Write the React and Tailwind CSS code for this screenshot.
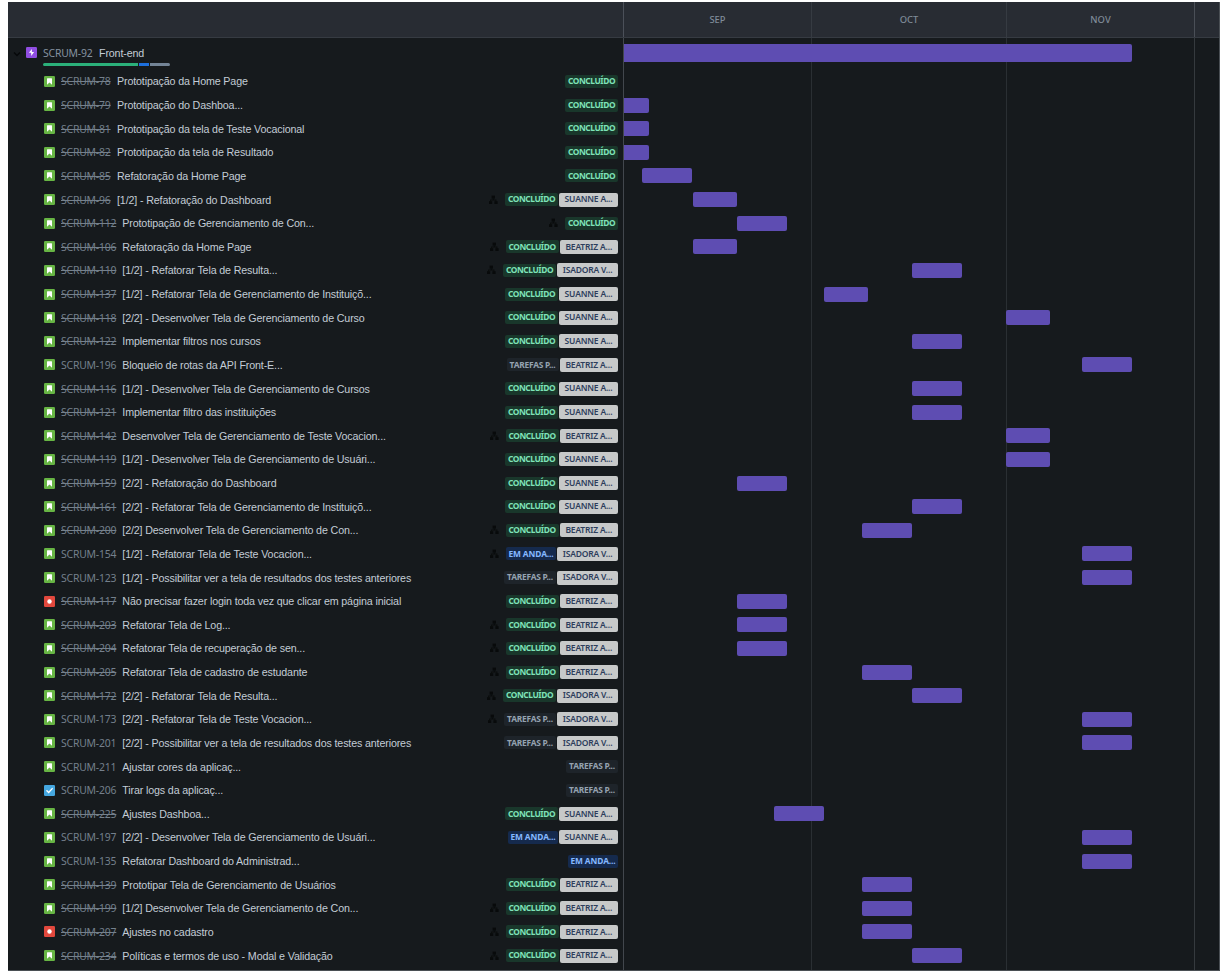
import React from "react";

const ORIGIN = 624;

const STATUS = {
  done: { label: "CONCLUÍDO", cls: "bg-[#19372b] text-[#7ee2b8] w-[53px] tracking-[-0.42px]" },
  todo: { label: "TAREFAS P...", cls: "bg-[#1e242a] text-[#95a2b0] w-[52px] tracking-[-0.22px]" },
  doing: { label: "EM ANDA...", cls: "bg-[#152a4d] text-[#85b8ff] w-[50px] tracking-[-0.1px]" },
};

const PEOPLE = {
  S: { label: "SUANNE A...", cls: "w-[59px]" },
  B: { label: "BEATRIZ A...", cls: "w-[58.5px]" },
  I: { label: "ISADORA V...", cls: "w-[61px]" },
};

// key, title, status, assignee, has children, bar start, bar end, kind
const ROWS = [
  [78, "Prototipação da Home Page", "done", "", 0, 0, 0],
  [79, "Prototipação do Dashboa...", "done", "", 0, 624, 649],
  [81, "Prototipação da tela de Teste Vocacional", "done", "", 0, 624, 649],
  [82, "Prototipação da tela de Resultado", "done", "", 0, 624, 649],
  [85, "Refatoração da Home Page", "done", "", 0, 642.4, 692.4],
  [96, "[1/2] - Refatoração do Dashboard", "done", "S", 1, 693, 737],
  [112, "Prototipação de Gerenciamento de Con...", "done", "", 1, 737, 787],
  [106, "Refatoração da Home Page", "done", "B", 1, 693, 737],
  [110, "[1/2] - Refatorar Tela de Resulta...", "done", "I", 1, 912.4, 962.4],
  [137, "[1/2] - Refatorar Tela de Gerenciamento de Instituiçõ...", "done", "S", 0, 824.4, 868.4],
  [118, "[2/2] - Desenvolver Tela de Gerenciamento de Curso", "done", "S", 0, 1006.4, 1050.4],
  [122, "Implementar filtros nos cursos", "done", "S", 0, 912.4, 962.4],
  [196, "Bloqueio de rotas da API Front-E...", "todo", "B", 0, 1082, 1132],
  [116, "[1/2] - Desenvolver Tela de Gerenciamento de Cursos", "done", "S", 0, 912.4, 962.4],
  [121, "Implementar filtro das instituições", "done", "S", 0, 912.4, 962.4],
  [142, "Desenvolver Tela de Gerenciamento de Teste Vocacion...", "done", "B", 1, 1006.4, 1050.4],
  [119, "[1/2] - Desenvolver Tela de Gerenciamento de Usuári...", "done", "S", 0, 1006.4, 1050.4],
  [159, "[2/2] - Refatoração do Dashboard", "done", "S", 0, 737, 787],
  [161, "[2/2] - Refatorar Tela de Gerenciamento de Instituiçõ...", "done", "S", 0, 912.4, 962.4],
  [200, "[2/2] Desenvolver Tela de Gerenciamento de Con...", "done", "B", 1, 862.4, 912.4],
  [154, "[1/2] - Refatorar Tela de Teste Vocacion...", "doing", "I", 1, 1082, 1132],
  [123, "[1/2] - Possibilitar ver a tela de resultados dos testes anteriores", "todo", "I", 0, 1082, 1132],
  [117, "Não precisar fazer login toda vez que clicar em página inicial", "done", "B", 0, 737, 787, "bug"],
  [203, "Refatorar Tela de Log...", "done", "B", 1, 737, 787],
  [204, "Refatorar Tela de recuperação de sen...", "done", "B", 1, 737, 787],
  [205, "Refatorar Tela de cadastro de estudante", "done", "B", 1, 862.4, 912.4],
  [172, "[2/2] - Refatorar Tela de Resulta...", "done", "I", 1, 912.4, 962.4],
  [173, "[2/2] - Refatorar Tela de Teste Vocacion...", "todo", "I", 1, 1082, 1132],
  [201, "[2/2] - Possibilitar ver a tela de resultados dos testes anteriores", "todo", "I", 0, 1082, 1132],
  [211, "Ajustar cores da aplicaç...", "todo", "", 0, 0, 0],
  [206, "Tirar logs da aplicaç...", "todo", "", 0, 0, 0, "task"],
  [225, "Ajustes Dashboa...", "done", "S", 0, 774.4, 824.4],
  [197, "[2/2] - Desenvolver Tela de Gerenciamento de Usuári...", "doing", "S", 0, 1082, 1132],
  [135, "Refatorar Dashboard do Administrad...", "doing", "", 0, 1082, 1132],
  [139, "Prototipar Tela de Gerenciamento de Usuários", "done", "B", 0, 862.4, 912.4],
  [199, "[1/2] Desenvolver Tela de Gerenciamento de Con...", "done", "B", 1, 862.4, 912.4],
  [207, "Ajustes no cadastro", "done", "B", 1, 862.4, 912.4, "bug"],
  [234, "Políticas e termos de uso - Modal e Validação", "done", "B", 1, 912.4, 962.4],
];

function KindIcon({ kind }) {
  if (kind === "bug")
    return (
      <svg viewBox="0 0 11 11" className="h-[11px] w-[11px] shrink-0">
        <rect width="11" height="11" rx="1.2" fill="#e2483d" />
        <circle cx="5.5" cy="5.5" r="2.2" fill="#fff" />
      </svg>
    );
  if (kind === "task")
    return (
      <svg viewBox="0 0 11 11" className="h-[11px] w-[11px] shrink-0">
        <rect width="11" height="11" rx="1.2" fill="#45a7e0" />
        <path d="M2.9 5.7 4.7 7.5 8.2 3.6" fill="none" stroke="#fff" strokeWidth="1.4" strokeLinecap="round" />
      </svg>
    );
  return (
    <svg viewBox="0 0 11 11" className="h-[11px] w-[11px] shrink-0">
      <rect width="11" height="11" rx="1.2" fill="#67b544" />
      <path d="M3 2.7q0-.5.5-.5h4q.5 0 .5.5v6L5.5 6.6 3 8.7z" fill="#fff" />
    </svg>
  );
}

function TreeIcon() {
  return (
    <svg viewBox="0 0 10 10" className="mr-[7px] h-[10px] w-[10px] shrink-0" fill="#080a0b">
      <rect x="3.6" y="0.6" width="3.4" height="3" />
      <rect x="1" y="6.2" width="3.2" height="2.8" />
      <rect x="6.4" y="6.2" width="3.2" height="2.8" />
      <path d="M4.9 3.6h.8v1h2.7v1.6h-.8v-.8H3v.8h-.8V4.6h2.7z" />
    </svg>
  );
}

function IssueRow({ row }) {
  const [id, title, status, person, tree, , , kind] = row;
  const st = STATUS[status];
  return (
    <div className="flex h-[23.64px] items-center pl-[36px] pr-[5px]">
      <KindIcon kind={kind} />
      <span
        className={
          "ml-[6px] shrink-0 whitespace-nowrap font-['Noto_Sans',sans-serif] text-[10.4px] leading-[14px] tracking-[-0.18px] text-[#74808c] " +
          (status === "done" ? "line-through " : "") +
          (id < 100 ? "w-[56px]" : "w-[61.3px]")
        }
      >
        SCRUM-{id}
      </span>
      <span className="whitespace-nowrap text-[10.7px] leading-[14px] tracking-[-0.14px] text-[#c3ccd6]">{title}</span>
      <span className="flex-1" />
      {tree ? <TreeIcon /> : null}
      <span
        className={
          "flex h-[13px] shrink-0 items-center justify-center whitespace-nowrap rounded-[2px] font-['Noto_Sans',sans-serif] text-[8.4px] font-bold leading-none " +
          st.cls
        }
      >
        {st.label}
      </span>
      {person ? (
        <span
          className={
            "ml-px flex h-[14px] shrink-0 items-center justify-center whitespace-nowrap rounded-[2px] bg-[#c7c9c9] font-['Noto_Sans',sans-serif] text-[8.5px] font-semibold leading-none tracking-[-0.18px] text-[#2d3d5c] " +
            PEOPLE[person].cls
          }
        >
          {PEOPLE[person].label}
        </span>
      ) : null}
    </div>
  );
}

export default function App() {
  return (
    <div className="h-[976px] w-[1222px] overflow-hidden bg-white pl-[8px] pt-[2px] font-['Liberation_Sans',sans-serif]">
      <div className="flex h-[969px] w-[1212px] flex-col overflow-hidden border-b border-r border-[#4a4f54] bg-[#161a1d]">
        <div className="flex h-[36px] shrink-0 border-b border-[#363b42] bg-[#282c33] pt-[2px] font-['Noto_Sans',sans-serif] text-[9.4px] font-medium text-[#7f8b98]">
          <div className="-mt-[2px] w-[615px] shrink-0" />
          <div className="-mt-[2px] flex w-[188px] items-center justify-center border-l border-[#4b5059] pt-[2px]">SEP</div>
          <div className="-mt-[2px] flex w-[195px] items-center justify-center border-l border-[#363b42] pt-[2px]">OCT</div>
          <div className="-mt-[2px] flex w-[188px] items-center justify-center border-l border-[#363b42] pt-[2px]">NOV</div>
          <div className="-mt-[2px] flex-1 border-l border-[#4a4f57]" />
        </div>
        <div className="flex min-h-0 flex-1">
          <div className="w-[615px] shrink-0">
            <div className="flex h-[31.6px] pl-[5px]">
              <svg viewBox="0 0 8 8" className="mt-[12px] h-[8px] w-[8px] shrink-0">
                <path d="M1 2.5 4 5.5 7 2.5" fill="none" stroke="#060809" strokeWidth="1.5" />
              </svg>
              <svg viewBox="0 0 11 11" className="ml-[5px] mt-[9px] h-[11px] w-[11px] shrink-0">
                <rect width="11" height="11" rx="1.2" fill="#904ee2" />
                <path d="M5.9 1.9 2.9 5.8h2.3v3.3l2.9-4H5.9z" fill="#fff" />
              </svg>
              <div className="ml-[6px] mt-[8px]">
                <div className="flex h-[14px]">
                  <span className="w-[56px] font-['Noto_Sans',sans-serif] text-[10.4px] leading-[14px] tracking-[-0.18px] text-[#8592a0]">SCRUM-92</span>
                  <span className="text-[10.7px] leading-[14px] tracking-[-0.14px] text-[#c3ccd6]">Front-end</span>
                </div>
                <div className="mt-[3px] flex h-[3px] w-[127px] gap-[1px] overflow-hidden rounded-full">
                  <div className="w-[95px] bg-[#2bb07a]" />
                  <div className="w-[10px] bg-[#1d6fdc]" />
                  <div className="flex-1 bg-[#738496]" />
                </div>
              </div>
            </div>
            {ROWS.map((r) => (
              <IssueRow key={r[0]} row={r} />
            ))}
          </div>
          <div className="relative flex-1 border-l border-[#42474d]">
            <div className="absolute inset-0 flex">
              <div className="w-[187px]" />
              <div className="w-[195px] border-l border-[#2a2f33]" />
              <div className="w-[188px] border-l border-[#2a2f33]" />
              <div className="flex-1 border-l border-[#353a3e]" />
            </div>
            <div className="relative">
              <div className="h-[31.6px] pt-[6px]">
                <div className="h-[18px] w-[508px] rounded-r-[2px] bg-[#5e4db2]" />
              </div>
              {ROWS.map((r) => (
                <div key={r[0]} className="flex h-[23.64px] items-center">
                  {r[6] ? (
                    <div
                      className={"h-[15px] bg-[#5e4db2] " + (r[5] === ORIGIN ? "rounded-r-[2px]" : "rounded-[2px]")}
                      style={{ marginLeft: r[5] - ORIGIN, width: r[6] - r[5] }}
                    />
                  ) : null}
                </div>
              ))}
            </div>
          </div>
        </div>
      </div>
    </div>
  );
}
